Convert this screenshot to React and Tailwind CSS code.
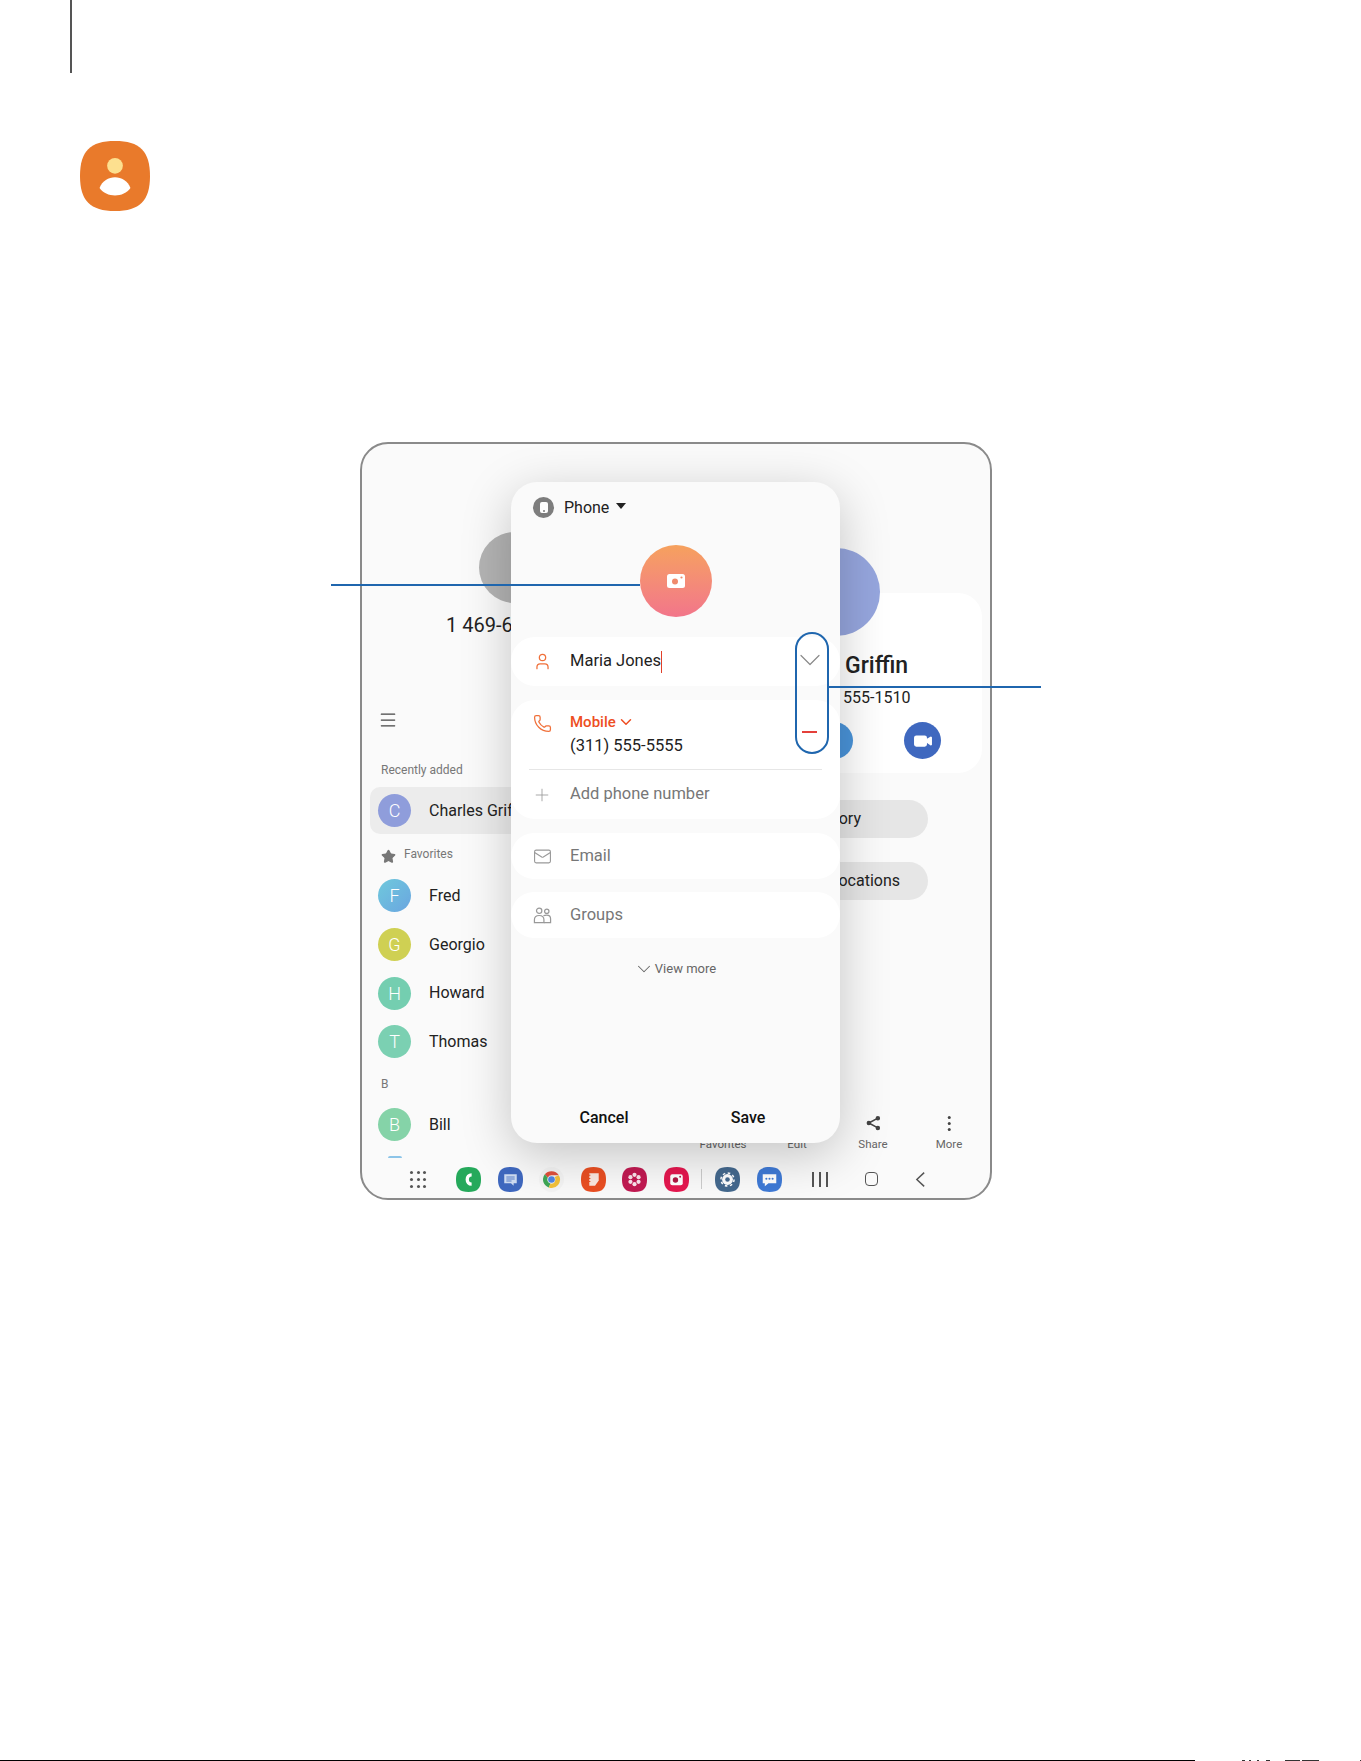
import { User, Phone, Plus, Mail, ChevronDown, Star, Menu, Video } from 'lucide-react';

const SQUIRCLE = 'M12 0C20.5 0 24 3.5 24 12S20.5 24 12 24S0 20.5 0 12S3.5 0 12 0Z';

const contacts = [
  { letter: 'F', name: 'Fred', color: 'bg-gradient-to-br from-[#6fc9dc] to-[#6aa5e0]' },
  { letter: 'G', name: 'Georgio', color: 'bg-[#cfd053]' },
  { letter: 'H', name: 'Howard', color: 'bg-[#74ceb0]' },
  { letter: 'T', name: 'Thomas', color: 'bg-[#7bd0b2]' },
];

const Squircle = ({ fill, children }) => (
  <svg viewBox="0 0 24 24" className="w-[25px] h-[25px] shrink-0">
    <path d={SQUIRCLE} fill={fill} />
    {children}
  </svg>
);

const dockIcons = [
  <Squircle key="phone" fill="#25a95b">
    <path d="M15 7.500C12.300 7.500 10.800 9.500 10.800 12S12.300 16.500 15 16.500" fill="none" stroke="#fff" strokeWidth="3.200" />
  </Squircle>,
  <Squircle key="messages" fill="#3f68bf">
    <path d="M6 7H18V15.500H15V18L12.500 15.500H6Z" fill="#cfdcf2" />
    <path d="M8 9.500H16M8 11.500H16M8 13.500H13" stroke="#5b80c9" strokeWidth="1" />
  </Squircle>,
  <svg key="chrome" viewBox="0 0 24 24" className="w-[25px] h-[25px] shrink-0">
    <circle cx="12" cy="12" r="12" fill="#f4f4f4" />
    <path d="M12 4A8 8 0 0 1 19 8H12A4 4 0 0 0 8.400 10.200L5.600 7A8 8 0 0 1 12 4Z" fill="#e0503c" />
    <path d="M5.600 7L8.400 10.200A4 4 0 0 0 11 15.900L9.400 19.600A8 8 0 0 1 5.600 7Z" fill="#3fa756" />
    <path d="M19 8A8 8 0 0 1 9.400 19.600L11 15.900A4 4 0 0 0 15 9.500L19 8Z" fill="#f3c13a" />
    <circle cx="12" cy="12" r="3.200" fill="#5086e6" />
  </svg>,
  <Squircle key="notes" fill="#ea4f22">
    <path d="M8 6H17V13L13.500 18H8Z" fill="#fbe9e0" />
    <path d="M6.500 8H9M6.500 11H9M6.500 14H9" stroke="#ea4f22" strokeWidth="1" />
  </Squircle>,
  <Squircle key="gallery" fill="#c21a52">
    <circle cx="12" cy="7.500" r="2" fill="#fbe4ec" />
    <circle cx="12" cy="16.500" r="2" fill="#fbe4ec" />
    <circle cx="8.100" cy="9.750" r="2" fill="#fbe4ec" />
    <circle cx="15.900" cy="9.750" r="2" fill="#fbe4ec" />
    <circle cx="8.100" cy="14.250" r="2" fill="#fbe4ec" />
    <circle cx="15.900" cy="14.250" r="2" fill="#fbe4ec" />
    <circle cx="12" cy="12" r="1.200" fill="#c21a52" />
  </Squircle>,
  <Squircle key="camera" fill="#e5174f">
    <rect x="6" y="7" width="12" height="10.500" rx="2" fill="#fff" />
    <circle cx="11" cy="12.500" r="2.600" fill="#b01542" />
    <circle cx="15.500" cy="9.300" r="0.900" fill="#b01542" />
  </Squircle>,
];

const App = () => {
  return (
    <div className="relative w-full h-[1761px] bg-white overflow-hidden font-['Roboto',sans-serif] text-[#222]">
      <div className="ml-[70px] w-[2px] h-[73px] bg-[#555]" />

      {/* App logo */}
      <div className="ml-[80px] mt-[68px]">
        <svg viewBox="0 0 24 24" className="w-[70px] h-[70px]">
          <path d={SQUIRCLE} fill="#e97a2b" />
          <circle cx="12" cy="8.500" r="2.700" fill="#fde08f" />
          <path d="M6.700 16.100C8.500 11.200 15.500 11.200 17.300 16.100C15 19.500 9 19.500 6.700 16.100Z" fill="#fff" />
        </svg>
      </div>

      {/* Tablet frame */}
      <div className="relative ml-[360px] mt-[231px] w-[632px] h-[758px] border-2 border-[#8a8a8a] rounded-[28px] bg-[#fafafa] overflow-hidden flex flex-col">
        <div className="flex flex-1 min-h-0">
          {/* Contact list */}
          <div className="w-[300px] shrink-0 pl-[8px]">
            <div className="ml-[109px] mt-[88px] w-[71px] h-[71px] rounded-full bg-[#b4b4b4]" />
            <p className="ml-[76px] mt-[9px] text-[20px] leading-[26px] whitespace-nowrap text-[#222]">1 469-6</p>
            <Menu className="ml-[8px] mt-[72px] w-[20px] h-[20px] text-[#444]" strokeWidth={1.5} />
            <p className="ml-[11px] mt-[32px] text-[12px] leading-[16px] text-[#777]">Recently added</p>
            <div className="mt-[9px] flex items-center h-[47px] pl-[8px] rounded-l-[10px] bg-[#ececec]">
              <span className="flex items-center justify-center w-[33px] h-[33px] rounded-full bg-[#8f9ddb] text-white text-[18px] font-light">C</span>
              <span className="ml-[18px] text-[16px] whitespace-nowrap">Charles Griffin</span>
            </div>
            <div className="mt-[11px] flex items-center h-[18px] pl-[11px]">
              <Star className="w-[15px] h-[15px] text-[#777] fill-[#777] translate-y-[2px]" />
              <span className="ml-[8px] text-[12px] text-[#777]">Favorites</span>
            </div>
            <div className="mt-[16px] flex flex-col gap-[15px]">
              {contacts.map((c) => (
                <div key={c.name} className="flex items-center h-[33.7px] pl-[8px]">
                  <span className={`flex items-center justify-center w-[33px] h-[33px] rounded-full text-white text-[18px] font-light ${c.color}`}>{c.letter}</span>
                  <span className="ml-[18px] text-[16px]">{c.name}</span>
                </div>
              ))}
            </div>
            <p className="ml-[11px] mt-[17px] text-[12px] leading-[16px] text-[#777]">B</p>
            <div className="mt-[16px] flex items-center h-[33.7px] pl-[8px]">
              <span className="flex items-center justify-center w-[33px] h-[33px] rounded-full bg-[#85d3a8] text-white text-[18px] font-light">B</span>
              <span className="ml-[18px] text-[16px]">Bill</span>
            </div>
            <div className="mt-[15px] ml-[18px] w-[14px] h-[2px] rounded-t-full bg-[#8cc4e8]" />
          </div>

          {/* Contact details */}
          <div className="relative flex-1 min-w-0 pr-[8px]">
            <div className="ml-[130px] mt-[104px] w-[88px] h-[88px] rounded-full bg-[#96a6de] relative z-10" />
            <div className="-mt-[43px] h-[180px] rounded-[24px] bg-white pl-[183px] pt-[58px]">
              <p className="text-[23px] leading-[30px] font-medium whitespace-nowrap">Griffin</p>
              <p className="mt-[7px] text-[16px] leading-[20px] whitespace-nowrap -ml-[2px]">555-1510</p>
              <div className="-ml-[29px] mt-[14px] flex gap-[51px]">
                <span className="flex items-center justify-center w-[37px] h-[37px] rounded-full bg-[#4a94da]" />
                <span className="flex items-center justify-center w-[37px] h-[37px] rounded-full bg-[#3f68bf]">
                  <Video className="w-[20px] h-[20px] text-white fill-white" strokeWidth={1.5} />
                </span>
              </div>
            </div>
            <div className="mt-[27px] ml-[86px] w-[180px] h-[38px] rounded-full bg-[#e6e6e6] flex items-center justify-end pr-[67px] text-[16px]">History</div>
            <div className="mt-[24px] ml-[86px] w-[180px] h-[38px] rounded-full bg-[#e6e6e6] flex items-center justify-end pr-[28px] text-[16px]">Locations</div>

            <div className="absolute top-[670px] left-0 text-[11.5px] leading-[16px] text-[#666]">
              <div className="absolute left-[211px] -translate-x-1/2 top-0 flex flex-col items-center">
                <svg viewBox="0 0 24 24" className="w-[18px] h-[18px] mb-[4px]" fill="#444">
                  <path d="M6 9A3 3 0 1 1 6 15A3 3 0 1 1 6 9ZM18 2.500A3 3 0 1 1 18 8.500A3 3 0 1 1 18 2.500ZM18 15.500A3 3 0 1 1 18 21.500A3 3 0 1 1 18 15.500Z" />
                  <path d="M6 12L18 5.500M6 12L18 18.500" stroke="#444" strokeWidth="2" />
                </svg>
                Share
              </div>
              <div className="absolute left-[287px] -translate-x-1/2 top-0 flex flex-col items-center">
                <span className="flex flex-col items-center justify-center gap-[3px] h-[18px] mb-[4px]">
                  <i className="block w-[3px] h-[3px] rounded-full bg-[#444]" />
                  <i className="block w-[3px] h-[3px] rounded-full bg-[#444]" />
                  <i className="block w-[3px] h-[3px] rounded-full bg-[#444]" />
                </span>
                More
              </div>
              <span className="absolute left-[61px] -translate-x-1/2 top-[22px]">Favorites</span>
              <span className="absolute left-[135px] -translate-x-1/2 top-[22px]">Edit</span>
            </div>
          </div>
        </div>

        {/* Bottom dock */}
        <div className="h-[42px] shrink-0 flex items-center pl-[48px] pt-[4px]">
          <div className="grid grid-cols-3 gap-[4px] w-[16px] shrink-0">
            {[0, 1, 2, 3, 4, 5, 6, 7, 8].map((i) => (
              <i key={i} className="block w-[3px] h-[3px] rounded-full bg-[#555]" />
            ))}
          </div>
          <div className="ml-[30px] flex items-center gap-[16.6px]">{dockIcons}</div>
          <div className="ml-[12px] w-px h-[20px] bg-[#ccc]" />
          <div className="ml-[13px] flex items-center gap-[16.6px]">
            <Squircle fill="#44698e">
              <circle cx="12" cy="12" r="5.200" fill="#fff" />
              <circle cx="12" cy="12" r="6.300" fill="none" stroke="#fff" strokeWidth="1.400" strokeDasharray="2.500 2.450" />
              <circle cx="12" cy="12" r="2.200" fill="#44698e" />
            </Squircle>
            <Squircle fill="#3f7ad6">
              <path d="M5.500 7H18.500V15.500H11L7.500 18.500V15.500H5.500Z" fill="#fff" />
              <circle cx="9" cy="11.200" r="1" fill="#3f7ad6" />
              <circle cx="12" cy="11.200" r="1" fill="#3f7ad6" />
              <circle cx="15" cy="11.200" r="1" fill="#3f7ad6" />
            </Squircle>
          </div>
          <div className="ml-[30px] flex gap-[5px]">
            <i className="block w-[2px] h-[15px] bg-[#555]" />
            <i className="block w-[2px] h-[15px] bg-[#555]" />
            <i className="block w-[2px] h-[15px] bg-[#555]" />
          </div>
          <div className="ml-[37px] w-[13px] h-[14px] border-[1.5px] border-[#555] rounded-[4px]" />
          <svg viewBox="0 0 12 18" className="ml-[37px] w-[11px] h-[17px]" fill="none" stroke="#555" strokeWidth="1.6">
            <path d="M10 1.500L2 9L10 16.500" />
          </svg>
        </div>

        {/* Edit contact dialog */}
        <div className="absolute left-[149px] top-[38px] w-[329px] h-[661px] rounded-[26px] bg-[#fafafa] shadow-[0_12px_50px_rgba(0,0,0,0.22)] flex flex-col z-20">
          <div className="flex items-center h-[21px] mt-[15px] ml-[22px]">
            <span className="flex items-center justify-center w-[21px] h-[21px] rounded-full bg-[#7d7d7d]">
              <span className="flex items-end justify-center w-[8px] h-[11px] rounded-[2px] bg-white pb-[1px]">
                <i className="block w-[2px] h-[2px] rounded-full bg-[#7d7d7d]" />
              </span>
            </span>
            <span className="ml-[10px] text-[16px]">Phone</span>
            <svg viewBox="0 0 10 6" className="ml-[7px] -mt-[3px] w-[10px] h-[6px]" fill="#222"><path d="M0 0H10L5 6Z" /></svg>
          </div>

          <div className="mt-[27px] self-center w-[72px] h-[72px] rounded-full bg-gradient-to-b from-[#f6a15d] to-[#f2758a] flex items-center justify-center">
            <svg viewBox="0 0 18 14" className="w-[18px] h-[14px]">
              <rect width="18" height="14" rx="2.500" fill="#fff" />
              <circle cx="8" cy="7.500" r="3" fill="#f08a6c" />
              <circle cx="14.500" cy="3.500" r="1.100" fill="#f08a6c" />
            </svg>
          </div>

          <div className="mt-[20px] h-[49px] rounded-[24px] bg-white flex items-center pl-[22px]">
            <User className="w-[19px] h-[19px] text-[#f0703a]" strokeWidth={1.6} />
            <span className="ml-[18px] text-[16.5px] text-[#222]">Maria Jones</span>
            <i className="block w-[1.5px] h-[22px] bg-[#e0402a]" />
            <ChevronDown className="ml-auto mr-[12px] -mt-[4px] w-[36px] h-[36px] text-[#8a8a8a]" strokeWidth={0.8} />
          </div>

          <div className="mt-[14px] rounded-[24px] bg-white">
            <div className="flex pl-[22px] pt-[12px] h-[69px]">
              <Phone className="mt-[2px] w-[19px] h-[19px] text-[#f0703a]" strokeWidth={1.6} />
              <div className="ml-[18px]">
                <div className="flex items-center h-[20px] text-[15px] leading-[20px] font-medium text-[#ee4e22]">
                  Mobile
                  <ChevronDown className="ml-[1px] w-[18px] h-[18px]" strokeWidth={2} />
                </div>
                <p className="mt-[4px] text-[16.5px] leading-[20px]">(311) 555-5555</p>
              </div>
              <i className="block ml-auto mr-[23px] mt-[19px] w-[15px] h-[2px] bg-[#e4403a]" />
            </div>
            <div className="mx-[18px] h-px bg-[#e6e6e6]" />
            <div className="flex items-center pl-[21px] h-[49px]">
              <Plus className="w-[20px] h-[20px] text-[#999]" strokeWidth={1} />
              <span className="ml-[18px] text-[16.5px] text-[#777]">Add phone number</span>
            </div>
          </div>

          <div className="mt-[14px] h-[46px] rounded-[24px] bg-white flex items-center pl-[22px]">
            <Mail className="w-[19px] h-[19px] text-[#999]" strokeWidth={1.4} />
            <span className="ml-[18px] text-[16.5px] text-[#777]">Email</span>
          </div>
          <div className="mt-[13px] h-[46px] rounded-[24px] bg-white flex items-center pl-[22px]">
            <svg viewBox="0 0 20 20" className="w-[19px] h-[19px]" fill="none" stroke="#999" strokeWidth="1.300">
              <circle cx="6.500" cy="5" r="2.800" />
              <circle cx="14.500" cy="5.500" r="2.300" />
              <path d="M1.500 17.500V14.500C1.500 11.500 4 10 6.500 10S11.500 11.500 11.500 14.500V17.500Z" />
              <path d="M11 10.300C12 9.700 13.200 9.500 14.500 9.500C16.700 9.500 18.500 11 18.500 13.500V17.500H11.500" />
            </svg>
            <span className="ml-[18px] text-[16.5px] text-[#777]">Groups</span>
          </div>

          <div className="mt-[23px] h-[16px] pr-[2px] flex items-center justify-center text-[13px] text-[#666]">
            <ChevronDown className="w-[22px] h-[22px]" strokeWidth={1.1} />
            <span>View more</span>
          </div>

          <div className="mt-auto mb-[13px] flex text-[16px] font-medium text-[#111]">
            <span className="w-[186px] text-center">Cancel</span>
            <span className="w-[102px] text-center">Save</span>
          </div>
        </div>

        {/* Callout oval */}
        <div className="absolute left-[433px] top-[188px] w-[34px] h-[122px] rounded-full border-2 border-[#1f66ae] z-30" />
      </div>

      {/* Callout lines */}
      <div className="absolute left-[331px] top-[584px] w-[309px] h-[2px] bg-[#1f66ae] z-40" />
      <div className="absolute left-[828px] top-[686px] w-[213px] h-[2px] bg-[#1f66ae] z-40" />

      {/* Page footer rule and the clipped tops of the footer text */}
      <div className="absolute left-0 bottom-0 w-[1195px] h-px bg-black" />
      <svg viewBox="0 0 131 1" className="absolute left-[1230px] bottom-0 w-[131px] h-px" fill="#333">
        <path d="M12 0h3v1h-3zM19 0h2v1h-2zM27 0h2v1h-2zM36 0h4v1h-4zM55 0h15v1h-15zM72 0h17v1h-17z" />
        <path d="M130 0h1v1h-1z" />
      </svg>
    </div>
  );
};

export default App;
